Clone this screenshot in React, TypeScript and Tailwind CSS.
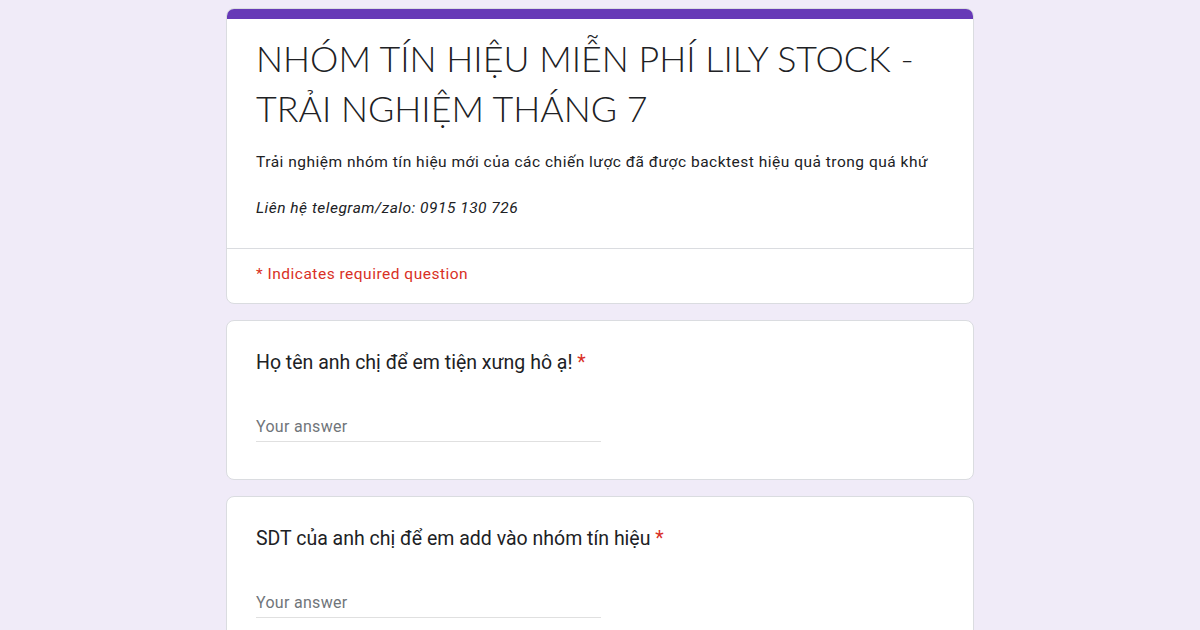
import React from "react";

function Question({ label }: { label: string }) {
  return (
    <div className="bg-white rounded-[8px] border border-[#dadce0] px-[29px] pt-[28px] pb-[37px]">
      <div className="text-[19.5px] leading-[28px] text-[#202124]" style={{ fontFamily: "Roboto, 'Noto Sans', sans-serif" }}>
        {label} <span className="text-[#d93025]">*</span>
      </div>
      <div className="mt-[38px] w-[345px] border-b border-[#e0e0e0] pb-[2px]">
        <div className="text-[16px] leading-[24px] tracking-[0.3px] text-[#70757a]" style={{ fontFamily: "Roboto, sans-serif" }}>
          Your answer
        </div>
      </div>
    </div>
  );
}

export default function App() {
  return (
    <div className="min-h-[630px] w-full bg-[#f0ebf8] overflow-hidden" style={{ fontFamily: "Roboto, sans-serif" }}>
      <div className="w-[748px] mx-auto pt-[8px] flex flex-col gap-[16px]">
        <div className="bg-white rounded-[8px] border border-[#dadce0] overflow-hidden">
          <div className="h-[10px] bg-[#673ab7]" />
          <div className="px-[29px] pt-[15px] pb-[28px] border-b border-[#dadce0]">
            <h1 className="text-[35.8px] leading-[50px] text-[#202124] font-light" style={{ fontFamily: "Lato, sans-serif" }}>
              NHÓM TÍN HIỆU MIỄN PHÍ LILY STOCK - TRẢI NGHIỆM THÁNG 7
            </h1>
            <div className="mt-[17px] text-[15.5px] leading-[23px] tracking-[0.5px] text-[#202124]">
              <p>Trải nghiệm nhóm tín hiệu mới của các chiến lược đã được backtest hiệu quả trong quá khứ</p>
              <p className="h-[23px]" />
              <p className="italic">Liên hệ telegram/zalo: 0915 130 726</p>
            </div>
          </div>
          <div className="px-[29px] pt-[14px] pb-[17px] text-[15.5px] leading-[23px] tracking-[0.5px] text-[#d93025]">
            * Indicates required question
          </div>
        </div>
        <Question label="Họ tên anh chị để em tiện xưng hô ạ!" />
        <Question label="SDT của anh chị để em add vào nhóm tín hiệu" />
      </div>
    </div>
  );
}
